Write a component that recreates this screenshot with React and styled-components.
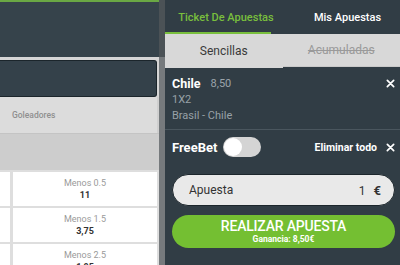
import React from "react";
import styled, { createGlobalStyle } from "styled-components";

const rows = [
  { label: "Menos 0.5", odd: "11" },
  { label: "Menos 1.5", odd: "3,75" },
  { label: "Menos 2.5", odd: "1,95" },
];

const CloseIcon = ({ push }) => (
  <Close $push={push} viewBox="0 0 10 10">
    <path d="M1.5 1.5 L8.5 8.5 M8.5 1.5 L1.5 8.5" />
  </Close>
);

function App() {
  return (
    <>
      <GlobalStyle />
      <Page>
        <LeftPane>
          <TopBar />
          <SearchBox />
          <MarketTabs>
            <MarketTab>Goleadores</MarketTab>
          </MarketTabs>
          <GroupHeader />
          <OddsGrid>
            {rows.map((r) => (
              <React.Fragment key={r.label}>
                <OddCell />
                <OddCell>
                  <OddLabel>{r.label}</OddLabel>
                  <OddValue>{r.odd}</OddValue>
                </OddCell>
              </React.Fragment>
            ))}
          </OddsGrid>
        </LeftPane>
        <Scrollbar />
        <Slip>
          <MainTabs>
            <MainTab $active>Ticket De Apuestas</MainTab>
            <MainTab>Mis Apuestas</MainTab>
          </MainTabs>
          <SubTabs>
            <SubTab $active>Sencillas</SubTab>
            <SubTab $disabled>Acumuladas</SubTab>
          </SubTabs>
          <Selection>
            <SelTop>
              <SelName>Chile</SelName>
              <SelOdd>8,50</SelOdd>
              <CloseIcon push />
            </SelTop>
            <SelMeta>1X2</SelMeta>
            <SelMeta>Brasil - Chile</SelMeta>
          </Selection>
          <FreeBetRow>
            <FreeBetLabel>FreeBet</FreeBetLabel>
            <Toggle>
              <Knob />
            </Toggle>
            <ClearAll>Eliminar todo</ClearAll>
            <CloseIcon />
          </FreeBetRow>
          <StakeInput>
            <span>Apuesta</span>
            <StakeValue>
              1<Currency>€</Currency>
            </StakeValue>
          </StakeInput>
          <PlaceButton>
            <PlaceTitle>REALIZAR APUESTA</PlaceTitle>
            <PlaceSub>Ganancia: 8,50€</PlaceSub>
          </PlaceButton>
        </Slip>
      </Page>
    </>
  );
}

export default App;

/****************** styles ******************/

const GlobalStyle = createGlobalStyle`
  html, body {
    margin: 0;
    padding: 0;
    background: #313d45;
  }
  body {
    font-family: Roboto, "Liberation Sans", sans-serif;
  }
`;

const Page = styled.div`
  display: flex;
  width: 400px;
  height: 265px;
  overflow: hidden;
`;

const LeftPane = styled.div`
  width: 159px;
  flex-shrink: 0;
  display: flex;
  flex-direction: column;
  background: #d6d6d6;
`;

const TopBar = styled.div`
  height: 55px;
  flex-shrink: 0;
  background: #36434b;
  border-top: 2px solid #6aa844;
`;

const SearchBox = styled.div`
  height: 35px;
  flex-shrink: 0;
  margin: 3px 2px 0 0;
  background: #34414a;
  border: 1px solid #1b252b;
  border-left: none;
  border-radius: 0 3px 3px 0;
`;

const MarketTabs = styled.div`
  height: 36px;
  flex-shrink: 0;
  display: flex;
  align-items: center;
  background: #dcdcdc;
  border-right: 2px solid #cfcfcf;
`;

const MarketTab = styled.div`
  padding-left: 12px;
  font-size: 8.5px;
  font-weight: 500;
  color: #8f8f8f;
`;

const GroupHeader = styled.div`
  height: 36px;
  flex-shrink: 0;
  background: #cdcdcd;
  border-top: 1px solid #c4c4c4;
`;

const OddsGrid = styled.div`
  display: grid;
  grid-template-columns: 10px 1fr;
  grid-auto-rows: 34px;
  gap: 2px 3px;
  padding: 2px 2px 0 0;
  background: #dedede;
`;

const OddCell = styled.div`
  display: flex;
  flex-direction: column;
  align-items: center;
  justify-content: center;
  background: #ffffff;
`;

const OddLabel = styled.div`
  font-size: 9px;
  color: #9a9a9a;
`;

const OddValue = styled.div`
  margin-top: 2px;
  font-size: 9px;
  font-weight: 700;
  color: #333;
`;

const Scrollbar = styled.div`
  width: 6px;
  flex-shrink: 0;
  background: linear-gradient(#4b5256 0 57px, #767a7d 57px);
`;

const Slip = styled.div`
  flex: 1;
  display: flex;
  flex-direction: column;
  background: #313d45;
  color: #fff;
`;

const MainTabs = styled.div`
  height: 34px;
  display: flex;
`;

const MainTab = styled.div`
  flex: ${(p) => (p.$active ? "0 0 118px" : "1")};
  position: relative;
  display: flex;
  align-items: center;
  justify-content: center;
  padding-left: ${(p) => (p.$active ? "4px" : "12px")};
  white-space: nowrap;
  font-size: 11px;
  font-weight: 500;
  color: ${(p) => (p.$active ? "#79bf3d" : "#ffffff")};
  box-sizing: border-box;

  &::after {
    content: "";
    display: ${(p) => (p.$active ? "block" : "none")};
    position: absolute;
    left: 0;
    bottom: 0;
    width: 106px;
    height: 2px;
    background: #79bf3d;
  }
`;

const SubTabs = styled.div`
  height: 34px;
  display: flex;
  align-items: flex-start;
  background: #313d45;
`;

const SubTab = styled.div`
  flex: 1;
  height: ${(p) => (p.$active ? "34px" : "32px")};
  display: flex;
  align-items: center;
  justify-content: center;
  background: #d8d8d8;
  font-size: 12px;
  color: ${(p) => (p.$disabled ? "#9a9a9a" : "#3a3a3a")};
  text-decoration: ${(p) => (p.$disabled ? "line-through" : "none")};
  border-bottom: ${(p) => (p.$disabled ? "1px solid #c9c9c9" : "none")};
`;

const Selection = styled.div`
  padding: 7px 5px 6px 7px;
  border-bottom: 1px solid #4a565e;
`;

const SelTop = styled.div`
  display: flex;
  align-items: center;
  height: 16px;
`;

const SelName = styled.span`
  font-size: 12.5px;
  font-weight: 700;
`;

const SelOdd = styled.span`
  margin-left: 10px;
  font-size: 11px;
  color: #9ba4aa;
`;

const Close = styled.svg`
  width: 9px;
  height: 9px;
  flex-shrink: 0;
  margin-left: ${(p) => (p.$push ? "auto" : "0")};
  fill: none;
  stroke: #ffffff;
  stroke-width: 1.9;
  stroke-linecap: round;
`;

const SelMeta = styled.div`
  margin-top: 2px;
  font-size: 11px;
  line-height: 14px;
  color: #98a1a7;
`;

const FreeBetRow = styled.div`
  display: flex;
  align-items: center;
  height: 34px;
  padding: 0 5px 0 7px;
`;

const FreeBetLabel = styled.span`
  font-size: 13px;
  font-weight: 700;
`;

const Toggle = styled.div`
  width: 38px;
  height: 20px;
  margin-left: 6px;
  border-radius: 10px;
  background: #d4d4d4;
  position: relative;
`;

const Knob = styled.div`
  position: absolute;
  left: 1px;
  top: 1px;
  width: 18px;
  height: 18px;
  border-radius: 50%;
  background: #ffffff;
`;

const ClearAll = styled.span`
  margin-left: auto;
  margin-right: 9px;
  font-size: 10.5px;
  font-weight: 700;
`;

const StakeInput = styled.div`
  margin: 10px 5px 0 7px;
  height: 30px;
  display: flex;
  align-items: center;
  padding: 0 13px 0 16px;
  border-radius: 16px;
  background: #e9e9e9;
  border: 1px solid #1c262c;
  font-size: 12px;
  color: #333;
`;

const StakeValue = styled.span`
  margin-left: auto;
  font-size: 12px;
`;

const Currency = styled.span`
  margin-left: 8px;
  font-size: 13px;
  font-weight: 700;
`;

const PlaceButton = styled.div`
  margin: 9px 5px 0 7px;
  height: 33px;
  display: flex;
  flex-direction: column;
  align-items: center;
  justify-content: center;
  border-radius: 17px;
  background: #74bf32;
`;

const PlaceTitle = styled.div`
  font-size: 14px;
  font-weight: 500;
  line-height: 15px;
  letter-spacing: -0.2px;
`;

const PlaceSub = styled.div`
  font-size: 8.5px;
  font-weight: 700;
  line-height: 10px;
`;
